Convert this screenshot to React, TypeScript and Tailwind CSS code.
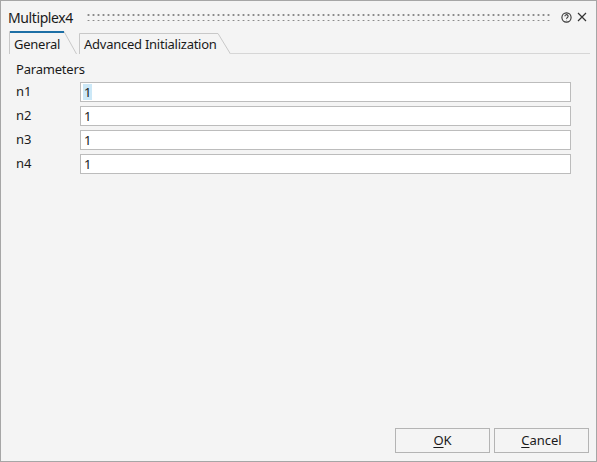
import React from "react";

const font = { fontFamily: '"Noto Sans", "Liberation Sans", sans-serif' };

function HelpIcon() {
  return (
    <svg width="11" height="11" viewBox="0 0 11 11" fill="none" stroke="#333" strokeWidth="1.1">
      <circle cx="5.5" cy="5.5" r="4.6" />
      <path d="M3.9 4.3a1.6 1.6 0 1 1 2.3 1.4c-.5.3-.7.5-.7 1.1" />
      <circle cx="5.5" cy="8.1" r="0.4" fill="#333" stroke="none" />
    </svg>
  );
}

function CloseIcon() {
  return (
    <svg width="10" height="10" viewBox="0 0 10 10" stroke="#333" strokeWidth="1.2">
      <path d="M1 1L9 9M9 1L1 9" />
    </svg>
  );
}

function Tab({ label, active, width }: { label: string; active?: boolean; width: number }) {
  const h = active ? 23 : 21;
  return (
    <div className="relative flex items-end" style={{ width: width + 13, height: h }}>
      <svg className="absolute left-0 top-0" width={width + 13} height={h} fill="none">
        <path
          d={`M0.5 ${h} V0.5 H${width} L${width + 12.5} ${h}`}
          stroke="#c8c8c8"
          strokeWidth="1"
        />
        {active && <path d={`M1 1 H${width}`} stroke="#1d6fa5" strokeWidth="2" />}
      </svg>
      <span className="relative pl-[5px] pb-[3px] text-[13px] tracking-[-0.25px] text-[#1a1a1a] leading-none">
        {label}
      </span>
    </div>
  );
}

function Row({ name, selected }: { name: string; selected?: boolean }) {
  return (
    <div className="flex items-center h-[20px]">
      <span className="w-[64px] text-[13px] text-[#1a1a1a]">{name}</span>
      <div className="flex-1 h-[20px] bg-white border border-[#bcbcbc] flex items-center pl-[2px]">
        <span
          className={
            "text-[13px] leading-[16px] px-[1px] text-[#1a1a1a] " + (selected ? "bg-[#cce8f7]" : "")
          }
        >
          1
        </span>
      </div>
    </div>
  );
}

export default function App() {
  return (
    <div
      style={font}
      className="w-[597px] h-[462px] bg-[#f4f4f4] border border-[#a6a6a6] flex flex-col overflow-hidden"
    >
      <div className="flex items-center h-[30px] pl-[7px] pr-[9px] pt-[2px]">
        <span className="text-[14px] text-[#1a1a1a] tracking-[-0.4px]">Multiplex4</span>
        <div className="flex-1 ml-[13px] mr-[9px] h-[8px] bg-[radial-gradient(circle,#8a8a8a_1px,transparent_1.2px)] bg-[length:5px_6px] bg-[position:0_-1px]" />
        <div className="flex items-center gap-[5px]">
          <HelpIcon />
          <CloseIcon />
        </div>
      </div>

      <div className="flex items-end pl-[8px] pr-[6px]">
        <Tab label="General" active width={55} />
        <div className="w-[2px]" />
        <Tab label="Advanced Initialization" width={139} />
        <div className="flex-1 h-px bg-[#d6d6d6]" />
      </div>

      <div className="flex flex-col pl-[15px] pr-[25px] pt-[9px]">
        <span className="text-[13px] tracking-[-0.2px] text-[#1a1a1a] leading-none mb-[6px]">Parameters</span>
        <div className="flex flex-col gap-[4px]">
          <Row name="n1" selected />
          <Row name="n2" />
          <Row name="n3" />
          <Row name="n4" />
        </div>
      </div>

      <div className="flex-1" />

      <div className="flex justify-end gap-[4px] pr-[7px] pb-[8px]">
        <button className="w-[95px] h-[25px] border border-[#b4b4b4] bg-[#f4f4f4] text-[13px] text-[#1a1a1a]">
          <span className="underline underline-offset-2">O</span>K
        </button>
        <button className="w-[95px] h-[25px] border border-[#b4b4b4] bg-[#f4f4f4] text-[13px] text-[#1a1a1a]">
          <span className="underline underline-offset-2">C</span>ancel
        </button>
      </div>
    </div>
  );
}
